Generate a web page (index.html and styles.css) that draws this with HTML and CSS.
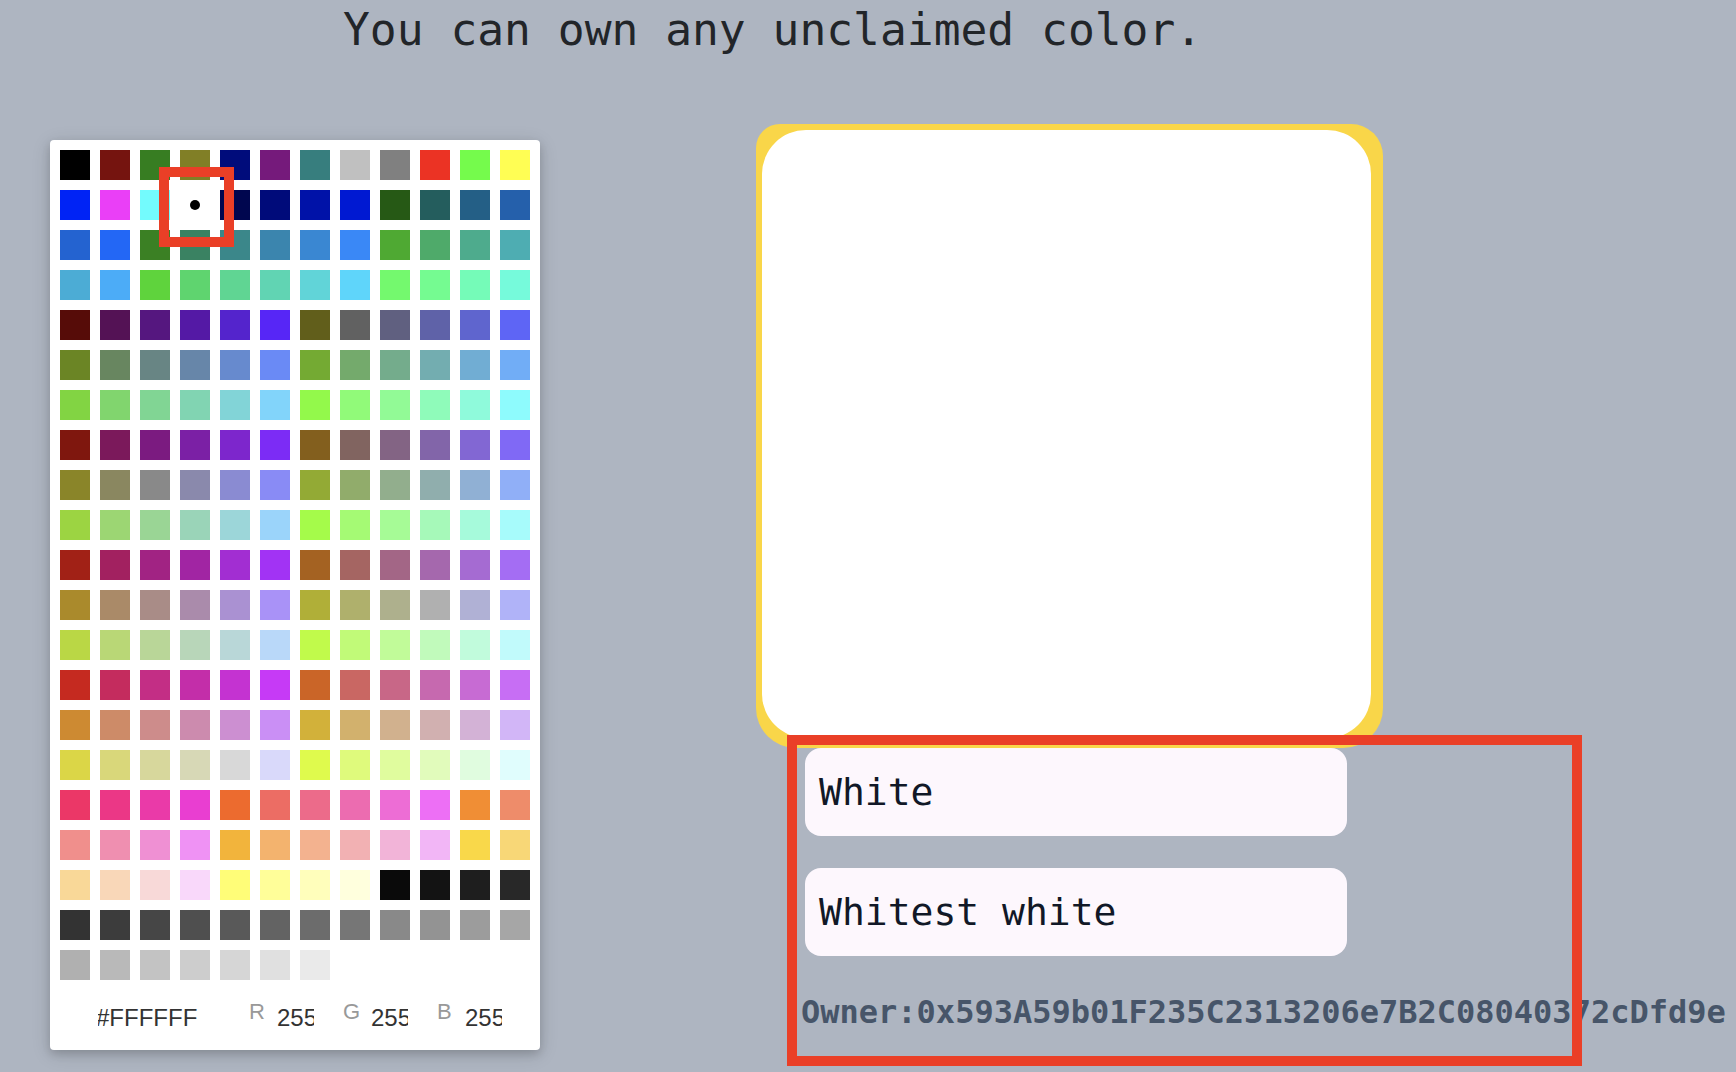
FILE: index.html
```html
<!DOCTYPE html>
<html lang="en">
<head>
<meta charset="utf-8">
<title>Own a color</title>
<link rel="stylesheet" href="styles.css">
</head>
<body>
<h1 class="title">You can own any unclaimed color.</h1>
<main class="layout">
  <section class="picker">
    <div class="swatches">
      <span class="sw" style="background:#000000"></span><span class="sw" style="background:#75140f"></span><span class="sw" style="background:#377d22"></span><span class="sw" style="background:#817f26"></span><span class="sw" style="background:#000c7b"></span><span class="sw" style="background:#751a7b"></span><span class="sw" style="background:#377e7e"></span><span class="sw" style="background:#c0c0c0"></span><span class="sw" style="background:#808080"></span><span class="sw" style="background:#eb3324"></span><span class="sw" style="background:#75fb4c"></span><span class="sw" style="background:#fffe54"></span>
      <span class="sw" style="background:#0023f5"></span><span class="sw" style="background:#ea3ff7"></span><span class="sw" style="background:#73fbfd"></span><span class="sw sel" style="background:#ffffff"></span><span class="sw" style="background:#00064f"></span><span class="sw" style="background:#000b7a"></span><span class="sw" style="background:#0012a8"></span><span class="sw" style="background:#0019d2"></span><span class="sw" style="background:#265915"></span><span class="sw" style="background:#245d5d"></span><span class="sw" style="background:#245f86"></span><span class="sw" style="background:#2560ab"></span>
      <span class="sw" style="background:#2463d0"></span><span class="sw" style="background:#2367f5"></span><span class="sw" style="background:#3b8024"></span><span class="sw" style="background:#3a8262"></span><span class="sw" style="background:#3b878a"></span><span class="sw" style="background:#3b85ae"></span><span class="sw" style="background:#3a87d2"></span><span class="sw" style="background:#3a88f6"></span><span class="sw" style="background:#4fa933"></span><span class="sw" style="background:#4faa6a"></span><span class="sw" style="background:#4eab8d"></span><span class="sw" style="background:#4eadb2"></span>
      <span class="sw" style="background:#4cacd5"></span><span class="sw" style="background:#4cacf7"></span><span class="sw" style="background:#5fd33d"></span><span class="sw" style="background:#5fd46f"></span><span class="sw" style="background:#60d593"></span><span class="sw" style="background:#61d4b3"></span><span class="sw" style="background:#61d4d8"></span><span class="sw" style="background:#5fd5fa"></span><span class="sw" style="background:#74f96e"></span><span class="sw" style="background:#75fb91"></span><span class="sw" style="background:#75fbb8"></span><span class="sw" style="background:#76fadb"></span>
      <span class="sw" style="background:#560c08"></span><span class="sw" style="background:#541255"></span><span class="sw" style="background:#55177f"></span><span class="sw" style="background:#5419a5"></span><span class="sw" style="background:#5424cc"></span><span class="sw" style="background:#5726f6"></span><span class="sw" style="background:#615e1b"></span><span class="sw" style="background:#616161"></span><span class="sw" style="background:#606080"></span><span class="sw" style="background:#5f62a8"></span><span class="sw" style="background:#5f65ce"></span><span class="sw" style="background:#5e65f5"></span>
      <span class="sw" style="background:#6b8525"></span><span class="sw" style="background:#688660"></span><span class="sw" style="background:#688584"></span><span class="sw" style="background:#6786a9"></span><span class="sw" style="background:#678ace"></span><span class="sw" style="background:#6a8af5"></span><span class="sw" style="background:#74aa33"></span><span class="sw" style="background:#74aa6c"></span><span class="sw" style="background:#74ac8c"></span><span class="sw" style="background:#73adb0"></span><span class="sw" style="background:#71add3"></span><span class="sw" style="background:#71adf6"></span>
      <span class="sw" style="background:#82d443"></span><span class="sw" style="background:#81d56e"></span><span class="sw" style="background:#81d594"></span><span class="sw" style="background:#81d4b2"></span><span class="sw" style="background:#82d4d7"></span><span class="sw" style="background:#82d4fa"></span><span class="sw" style="background:#93f94b"></span><span class="sw" style="background:#91fa79"></span><span class="sw" style="background:#92fa96"></span><span class="sw" style="background:#8ffbba"></span><span class="sw" style="background:#8ffadb"></span><span class="sw" style="background:#8efbfd"></span>
      <span class="sw" style="background:#7f170e"></span><span class="sw" style="background:#7b195b"></span><span class="sw" style="background:#7b1b80"></span><span class="sw" style="background:#7b20a5"></span><span class="sw" style="background:#7d26cc"></span><span class="sw" style="background:#7c2cf5"></span><span class="sw" style="background:#835f1e"></span><span class="sw" style="background:#816460"></span><span class="sw" style="background:#836484"></span><span class="sw" style="background:#8265a9"></span><span class="sw" style="background:#8267d3"></span><span class="sw" style="background:#8069f5"></span>
      <span class="sw" style="background:#8a8529"></span><span class="sw" style="background:#8a8760"></span><span class="sw" style="background:#898989"></span><span class="sw" style="background:#8a89ac"></span><span class="sw" style="background:#8a8bd2"></span><span class="sw" style="background:#898bf5"></span><span class="sw" style="background:#93aa35"></span><span class="sw" style="background:#91ac6b"></span><span class="sw" style="background:#92ae8d"></span><span class="sw" style="background:#90aead"></span><span class="sw" style="background:#90b0d4"></span><span class="sw" style="background:#90aff7"></span>
      <span class="sw" style="background:#9cd442"></span><span class="sw" style="background:#9cd673"></span><span class="sw" style="background:#9ad595"></span><span class="sw" style="background:#9ad4b8"></span><span class="sw" style="background:#9cd6d9"></span><span class="sw" style="background:#9bd4fa"></span><span class="sw" style="background:#a5fb4a"></span><span class="sw" style="background:#a5fa74"></span><span class="sw" style="background:#a6fb96"></span><span class="sw" style="background:#a6f9b9"></span><span class="sw" style="background:#a6fadb"></span><span class="sw" style="background:#a7fbfb"></span>
      <span class="sw" style="background:#a12116"></span><span class="sw" style="background:#a22160"></span><span class="sw" style="background:#a12383"></span><span class="sw" style="background:#a125a3"></span><span class="sw" style="background:#a22ed2"></span><span class="sw" style="background:#a233f4"></span><span class="sw" style="background:#a46222"></span><span class="sw" style="background:#a56562"></span><span class="sw" style="background:#a36686"></span><span class="sw" style="background:#a568ad"></span><span class="sw" style="background:#a56bd2"></span><span class="sw" style="background:#a46df3"></span>
      <span class="sw" style="background:#aa8a2c"></span><span class="sw" style="background:#aa8a68"></span><span class="sw" style="background:#a98c87"></span><span class="sw" style="background:#aa8bab"></span><span class="sw" style="background:#aa91d2"></span><span class="sw" style="background:#a992f7"></span><span class="sw" style="background:#b0af38"></span><span class="sw" style="background:#afb06c"></span><span class="sw" style="background:#aeb08d"></span><span class="sw" style="background:#b0b0b0"></span><span class="sw" style="background:#b0b1d5"></span><span class="sw" style="background:#b0b3f8"></span>
      <span class="sw" style="background:#bad745"></span><span class="sw" style="background:#b9d776"></span><span class="sw" style="background:#b9d698"></span><span class="sw" style="background:#b8d6b9"></span><span class="sw" style="background:#b9d7d8"></span><span class="sw" style="background:#b9d8f9"></span><span class="sw" style="background:#c1fa4b"></span><span class="sw" style="background:#c1fa78"></span><span class="sw" style="background:#c1fb99"></span><span class="sw" style="background:#c1fabb"></span><span class="sw" style="background:#c1fbdc"></span><span class="sw" style="background:#c1fafb"></span>
      <span class="sw" style="background:#c52a20"></span><span class="sw" style="background:#c42c5e"></span><span class="sw" style="background:#c32e85"></span><span class="sw" style="background:#c32ea9"></span><span class="sw" style="background:#c433d1"></span><span class="sw" style="background:#c63af6"></span><span class="sw" style="background:#ca6528"></span><span class="sw" style="background:#c96763"></span><span class="sw" style="background:#c86787"></span><span class="sw" style="background:#c669af"></span><span class="sw" style="background:#c76bd3"></span><span class="sw" style="background:#c76ef4"></span>
      <span class="sw" style="background:#cd8a32"></span><span class="sw" style="background:#cd8b68"></span><span class="sw" style="background:#cd8c8b"></span><span class="sw" style="background:#cc8bae"></span><span class="sw" style="background:#cc8fd1"></span><span class="sw" style="background:#ca8ff5"></span><span class="sw" style="background:#d2b13a"></span><span class="sw" style="background:#d2b16d"></span><span class="sw" style="background:#d1b18e"></span><span class="sw" style="background:#d1b0b0"></span><span class="sw" style="background:#d3b2d6"></span><span class="sw" style="background:#d2b6f7"></span>
      <span class="sw" style="background:#dbd647"></span><span class="sw" style="background:#d9d77a"></span><span class="sw" style="background:#d7d79c"></span><span class="sw" style="background:#d7d8b6"></span><span class="sw" style="background:#d8d8d8"></span><span class="sw" style="background:#d9d9fa"></span><span class="sw" style="background:#dffa4d"></span><span class="sw" style="background:#dffa7c"></span><span class="sw" style="background:#e0fc9e"></span><span class="sw" style="background:#e1fbbb"></span><span class="sw" style="background:#e0fcdf"></span><span class="sw" style="background:#e0fdfd"></span>
      <span class="sw" style="background:#eb3767"></span><span class="sw" style="background:#eb3786"></span><span class="sw" style="background:#ea3aa8"></span><span class="sw" style="background:#e93ed1"></span><span class="sw" style="background:#ec6b2f"></span><span class="sw" style="background:#ec6d64"></span><span class="sw" style="background:#ec6b8a"></span><span class="sw" style="background:#ec6cb0"></span><span class="sw" style="background:#ed6dd5"></span><span class="sw" style="background:#ed6ff5"></span><span class="sw" style="background:#f08e35"></span><span class="sw" style="background:#ee8c6a"></span>
      <span class="sw" style="background:#f08f8c"></span><span class="sw" style="background:#ef8fb0"></span><span class="sw" style="background:#ef90d3"></span><span class="sw" style="background:#ef92f4"></span><span class="sw" style="background:#f2b43c"></span><span class="sw" style="background:#f3b36e"></span><span class="sw" style="background:#f3b28f"></span><span class="sw" style="background:#f2b1b3"></span><span class="sw" style="background:#f2b4d8"></span><span class="sw" style="background:#f2b6f6"></span><span class="sw" style="background:#f9d84a"></span><span class="sw" style="background:#f8d777"></span>
      <span class="sw" style="background:#f9d898"></span><span class="sw" style="background:#f9d7b8"></span><span class="sw" style="background:#f8d9d8"></span><span class="sw" style="background:#f9d8fa"></span><span class="sw" style="background:#fffd78"></span><span class="sw" style="background:#fffe99"></span><span class="sw" style="background:#fffebb"></span><span class="sw" style="background:#ffffdd"></span><span class="sw" style="background:#0a0a0a"></span><span class="sw" style="background:#131313"></span><span class="sw" style="background:#1e1e1e"></span><span class="sw" style="background:#282828"></span>
      <span class="sw" style="background:#333333"></span><span class="sw" style="background:#3c3c3c"></span><span class="sw" style="background:#464646"></span><span class="sw" style="background:#4f4f4f"></span><span class="sw" style="background:#595959"></span><span class="sw" style="background:#636363"></span><span class="sw" style="background:#6c6c6c"></span><span class="sw" style="background:#767676"></span><span class="sw" style="background:#898989"></span><span class="sw" style="background:#939393"></span><span class="sw" style="background:#9c9c9c"></span><span class="sw" style="background:#a6a6a6"></span>
      <span class="sw" style="background:#b0b0b0"></span><span class="sw" style="background:#b9b9b9"></span><span class="sw" style="background:#c3c3c3"></span><span class="sw" style="background:#cdcdcd"></span><span class="sw" style="background:#d6d6d6"></span><span class="sw" style="background:#e0e0e0"></span><span class="sw" style="background:#eaeaea"></span>
    </div>
    <div class="fields">
      <span class="hex">#FFFFFF</span>
      <span class="lbl">R</span><span class="val">255</span>
      <span class="lbl">G</span><span class="val">255</span>
      <span class="lbl">B</span><span class="val">255</span>
    </div>
  </section>
  <section class="detail">
    <div class="frame"><div class="preview"></div></div>
    <div class="field">White</div>
    <div class="field">Whitest white</div>
    <p class="owner">Owner:0x593A59b01F235C2313206e7B2C08040372cDfd9e</p>
  </section>
</main>
<div class="mark mark-swatch"></div>
<div class="mark mark-info"></div>
</body>
</html>
```
FILE: styles.css
```css
* { box-sizing: border-box; }
html, body { margin: 0; }
body {
  position: relative;
  width: 1736px;
  height: 1072px;
  overflow: hidden;
  background: #aeb5c1;
  font-family: "DejaVu Sans Mono", monospace;
}
.title {
  margin: 0;
  padding: 2px 0 0 343px;
  font-size: 44.6px;
  line-height: 56px;
  font-weight: 400;
  color: #222529;
  white-space: nowrap;
}
.layout {
  display: flex;
  align-items: flex-start;
  margin-top: 66px;
}
.picker {
  margin: 16px 0 0 50px;
  width: 490px;
  height: 910px;
  padding: 10px 10px 0;
  background: #fff;
  border-radius: 4px;
  box-shadow: 0 4px 20px rgba(0,0,0,.12), 0 4px 10px rgba(0,0,0,.16);
  display: flex;
  flex-direction: column;
}
.swatches {
  display: grid;
  grid-template-columns: repeat(12, 30px);
  grid-auto-rows: 30px;
  gap: 10px;
}
.sw { display: block; position: relative; }
.sw.sel::after {
  content: "";
  position: absolute;
  left: 10px;
  top: 10px;
  width: 10px;
  height: 10px;
  border-radius: 50%;
  background: #000;
}
.fields {
  display: flex;
  align-items: flex-start;
  height: 70px;
  padding-top: 21px;
  font-family: "Liberation Sans", Arial, sans-serif;
}
.hex {
  margin-left: 38px;
  width: 151px;
  padding-top: 5px;
  font-size: 24px;
  line-height: 24px;
  color: #333;
  overflow: hidden;
  white-space: nowrap;
  text-indent: -2px;
}
.lbl {
  width: 28px;
  font-size: 22px;
  line-height: 22px;
  color: #999;
}
.val {
  width: 37px;
  padding-top: 5px;
  font-size: 24px;
  line-height: 24px;
  color: #333;
  overflow: hidden;
  white-space: nowrap;
}
.val + .lbl { margin-left: 29px; }
.detail {
  margin-left: 216px;
  display: flex;
  flex-direction: column;
}
.frame {
  width: 627px;
  height: 624px;
  padding: 6px 12px 10px 6px;
  background: #f9d649;
  border-radius: 24px 32px 40px 40px;
}
.preview {
  height: 100%;
  background: #fff;
  border-radius: 44px;
}
.field {
  margin-left: 49px;
  width: 542px;
  height: 88px;
  padding-left: 14px;
  border-radius: 16px;
  background: #fdf7fd;
  display: flex;
  align-items: center;
  font-size: 38px;
  color: #111827;
  white-space: nowrap;
}
.field + .field { margin-top: 32px; }
.owner {
  margin: 37px 0 0 45px;
  font-size: 32px;
  font-weight: 700;
  color: #475569;
  white-space: nowrap;
}
.mark {
  position: absolute;
  border: 10px solid #ea3f27;
  pointer-events: none;
}
.mark-swatch { left: 159px; top: 167px; width: 75px; height: 80px; }
.mark-info { left: 787px; top: 735px; width: 795px; height: 331px; }
```
